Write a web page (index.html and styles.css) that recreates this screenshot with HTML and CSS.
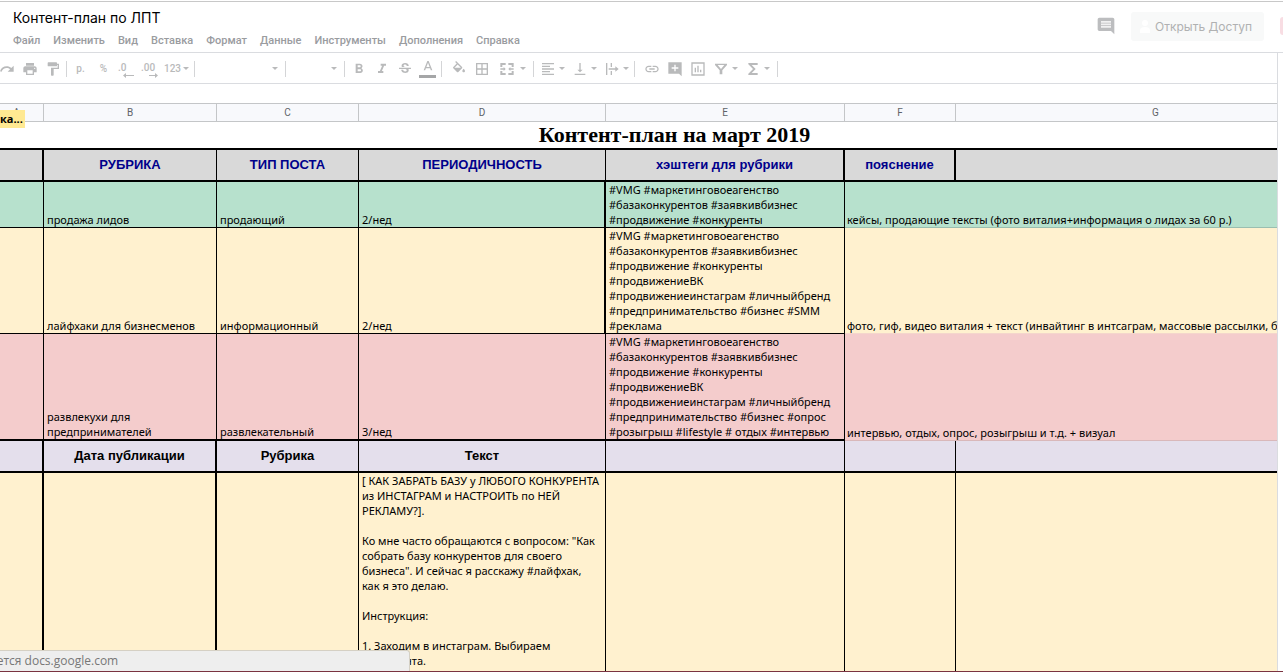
FILE: index.html
```html
<!DOCTYPE html>
<html lang="ru">
<head>
<meta charset="utf-8">
<title>Контент-план по ЛПТ</title>
<link rel="stylesheet" href="styles.css">
</head>
<body>
<header class="header">
  <div class="doc">
    <input class="doc-title" type="text" value="Контент-план по ЛПТ" aria-label="Название документа">
    <nav class="menu">
      <button>Файл</button><button>Изменить</button><button>Вид</button><button>Вставка</button><button>Формат</button><button>Данные</button><button>Инструменты</button><button>Дополнения</button><button>Справка</button>
    </nav>
  </div>
  <div class="actions">
    <button class="comments" aria-label="Комментарии"><svg viewBox="0 0 24 24" width="20" height="20"><path d="M22 4c0-1.100-.9-2-2-2H4c-1.100 0-2 .9-2 2v12c0 1.100.9 2 2 2h14l4 4V4z"/><path fill="#f1f1f2" d="M6 12h12v2H6zM6 9h12v2H6zM6 6h12v2H6z"/></svg></button>
    <button class="share"><svg viewBox="0 0 12 16" width="12" height="16"><circle cx="6" cy="4" r="3"/><path d="M1 14V11c0-2 2-3 5-3s5 1 5 3v3z"/></svg>Открыть Доступ</button>
    <span class="avatar"></span>
  </div>
</header>
<main class="work">
  <div class="main-column">
    <div class="toolbar" role="toolbar" aria-label="Форматирование">
      <button class="tool" aria-label="Повторить"><svg viewBox="0 0 24 24"><path d="M18.400 10.600C16.550 9 14.150 8 11.500 8c-4.650 0-8.580 3-9.960 7.200L3.900 16c1-3.200 4-5.500 7.600-5.500 1.950 0 3.730.7 5.120 1.900L13 16h9V7z"/></svg></button>
      <button class="tool" aria-label="Печать"><svg viewBox="0 0 24 24"><path d="M19 8H5c-1.660 0-3 1.340-3 3v6h4v4h12v-4h4v-6c0-1.660-1.340-3-3-3zm-3 11H8v-5h8v5zm3-7c-.55 0-1-.45-1-1s.45-1 1-1 1 .45 1 1-.45 1-1 1zm-1-9H6v4h12V3z"/></svg></button>
      <button class="tool" aria-label="Копировать форматирование"><svg viewBox="0 0 24 24"><path d="M18 4V3c0-.55-.45-1-1-1H5c-.55 0-1 .45-1 1v4c0 .55.450 1 1 1h12c.55 0 1-.45 1-1V6h1v4H9v11c0 .55.450 1 1 1h2c.55 0 1-.45 1-1v-9h8V4h-3z"/></svg></button>
      <span class="sep"></span>
      <button class="tool">р.</button>
      <button class="tool">%</button>
      <button class="tool places"><span>.0</span><svg viewBox="0 0 12 5"><path d="M3 0v2h8v1H3v2L0 2.500z"/></svg></button>
      <button class="tool places"><span>.00</span><svg viewBox="0 0 12 5"><path d="M9 0v2H3v1h6v2l3-2.500z"/></svg></button>
      <button class="tool format">123<svg class="arrow" viewBox="0 0 6 3"><path d="M0 0h6L3 3z"/></svg></button>
      <span class="sep"></span>
      <span class="pick pick-font"><select aria-label="Шрифт"><option></option></select><svg class="arrow" viewBox="0 0 6 3"><path d="M0 0h6L3 3z"/></svg></span>
      <span class="sep"></span>
      <span class="pick pick-size"><select aria-label="Размер шрифта"><option></option></select><svg class="arrow" viewBox="0 0 6 3"><path d="M0 0h6L3 3z"/></svg></span>
      <span class="sep"></span>
      <button class="tool" aria-label="Полужирный"><svg viewBox="0 0 24 24"><path d="M15.600 10.790c.97-.67 1.650-1.770 1.650-2.790 0-2.260-1.750-4-4-4H7v14h7.040c2.090 0 3.710-1.700 3.710-3.790 0-1.520-.86-2.820-2.150-3.420zM10 6.500h3c.83 0 1.500.67 1.500 1.500s-.67 1.500-1.500 1.500h-3v-3zm3.500 9H10v-3h3.500c.83 0 1.500.67 1.500 1.500s-.67 1.500-1.500 1.500z"/></svg></button>
      <button class="tool" aria-label="Курсив"><svg viewBox="0 0 24 24"><path d="M10 4v3h2.210l-3.420 8H6v3h8v-3h-2.210l3.420-8H18V4z"/></svg></button>
      <button class="tool" aria-label="Зачеркнутый"><svg viewBox="0 0 24 24"><path d="M6.850 7.080C6.850 4.370 9.450 3 12.240 3c1.640 0 3 .49 3.900 1.280.77.65 1.460 1.730 1.460 3.240h-3c0-.31-.05-.59-.15-.85-.29-.86-1.200-1.280-2.250-1.280-1.860 0-2.340 1-2.340 1.700 0 .48.25.88.74 1.210.38.25.77.48 1.410.7H7.390c-.21-.34-.54-.89-.54-1.920zM21 12v-2H3v2h9.620c1.150.45 1.960.75 1.960 1.970 0 1-.81 1.670-2.280 1.670-1.540 0-2.930-.54-2.930-2.510H6.400c0 .55.08 1.130.24 1.580.81 2.290 3.290 3.300 5.670 3.300 2.270 0 5.300-.89 5.300-4.050 0-.3 0-1.160-.48-1.940H21V12z"/></svg></button>
      <button class="tool text-color" aria-label="Цвет текста"><svg viewBox="0 0 24 24"><path d="M11 3L5.500 17h2.250l1.120-3h6.250l1.120 3h2.250L13 3h-2zm-1.380 9L12 5.670 14.380 12H9.620z"/></svg></button>
      <span class="sep"></span>
      <div class="group">
        <button class="tool" aria-label="Цвет заливки"><svg viewBox="0 0 24 24"><path d="M16.560 8.940L7.620 0 6.210 1.410l2.380 2.380-5.150 5.150c-.59.59-.59 1.540 0 2.120l5.500 5.500c.6.59 1.520.59 2.120 0l5.500-5.500c.59-.58.59-1.530 0-2.120zM5.200 10L10 5.200 14.800 10zM19 11.500s-2 2.170-2 3.500c0 1.100.9 2 2 2s2-.9 2-2c0-1.330-2-3.500-2-3.500z"/></svg></button>
        <button class="tool" aria-label="Границы"><svg viewBox="0 0 24 24"><path d="M3 3v18h18V3H3zm8 16H5v-6h6v6zm0-8H5V5h6v6zm8 8h-6v-6h6v6zm0-8h-6V5h6v6z"/></svg></button>
        <button class="tool merge" aria-label="Объединить ячейки"><svg viewBox="0 0 24 24"><path d="M2 3h8v3H5v3H2zM14 3h8v6h-3V6h-5zM2 15h3v3h5v3H2zM19 15h3v6h-8v-3h5zM2 11h5V9l3 3-3 3v-2H2zM22 11h-5V9l-3 3 3 3v-2h5z"/></svg></button>
        <button class="more" aria-label="Варианты объединения"><svg class="arrow" viewBox="0 0 6 3"><path d="M0 0h6L3 3z"/></svg></button>
      </div>
      <span class="sep"></span>
      <button class="tool" aria-label="Горизонтальное выравнивание"><svg viewBox="0 0 24 24"><path d="M15 15H3v2h12v-2zm0-8H3v2h12V7zM3 13h18v-2H3v2zm0 8h18v-2H3v2zM3 3v2h18V3H3z"/></svg></button>
      <button class="more" aria-label="Варианты"><svg class="arrow" viewBox="0 0 6 3"><path d="M0 0h6L3 3z"/></svg></button>
      <button class="tool" aria-label="Вертикальное выравнивание"><svg viewBox="0 0 24 24"><path d="M16 13h-3V3h-2v10H8l4 4 4-4zM4 19v2h16v-2H4z"/></svg></button>
      <button class="more" aria-label="Варианты"><svg class="arrow" viewBox="0 0 6 3"><path d="M0 0h6L3 3z"/></svg></button>
      <button class="tool" aria-label="Перенос текста"><svg viewBox="0 0 24 24"><path d="M3 3h2v18H3zM10 3h2v6h-2zM10 15h2v6h-2zM7 11h10V8l5 4-5 4v-3H7z"/></svg></button>
      <button class="more" aria-label="Варианты"><svg class="arrow" viewBox="0 0 6 3"><path d="M0 0h6L3 3z"/></svg></button>
      <span class="sep"></span>
      <div class="group">
        <button class="tool" aria-label="Вставить ссылку"><svg viewBox="0 0 24 24"><path d="M3.900 12c0-1.710 1.390-3.100 3.100-3.100h4V7H7c-2.760 0-5 2.240-5 5s2.240 5 5 5h4v-1.900H7c-1.710 0-3.100-1.390-3.100-3.100zM8 13h8v-2H8v2zm9-6h-4v1.900h4c1.710 0 3.100 1.390 3.100 3.100s-1.390 3.100-3.100 3.100h-4V17h4c2.760 0 5-2.240 5-5s-2.240-5-5-5z"/></svg></button>
        <button class="tool" aria-label="Вставить комментарий"><svg viewBox="0 0 24 24"><path d="M22 2H2v17h16l4 4V2zM17 11.500h-4v4h-2v-4H7v-2h4v-4h2v4h4v2z"/></svg></button>
        <button class="tool" aria-label="Вставить диаграмму"><svg viewBox="0 0 24 24"><path d="M2 2v20h20V2H2zm18 18H4V4h16v16zM9 17H7v-7h2v7zm4 0h-2V7h2v10zm4 0h-2v-4h2v4z"/></svg></button>
        <button class="tool" aria-label="Создать фильтр"><svg viewBox="0 0 24 24"><path d="M3 4h18v2l-7 8v6h-4v-6L3 6zM7 6l5 6 5-6z"/></svg></button>
        <button class="more" aria-label="Варианты фильтра"><svg class="arrow" viewBox="0 0 6 3"><path d="M0 0h6L3 3z"/></svg></button>
        <button class="tool" aria-label="Функции"><svg viewBox="0 0 24 24"><path d="M19 3H5v2l7 7-7 7v2h14v-3H10l6-6-6-6h9z"/></svg></button>
        <button class="more" aria-label="Список функций"><svg class="arrow" viewBox="0 0 6 3"><path d="M0 0h6L3 3z"/></svg></button>
      </div>
      <span class="sep"></span>
    </div>
    <div class="formula"></div>
    <div class="sheet">
      <table class="grid">
        <colgroup><col class="col-a"><col class="col-b"><col class="col-c"><col class="col-d"><col class="col-e"><col class="col-f"><col class="col-g"></colgroup>
        <thead>
          <tr class="letters"><th>A</th><th>B</th><th>C</th><th>D</th><th>E</th><th>F</th><th>G</th></tr>
        </thead>
        <tbody>
          <tr class="title-row"><td colspan="7">Контент-план на март 2019</td></tr>
          <tr class="head gray"><th class="thick"></th><th>РУБРИКА</th><th>ТИП ПОСТА</th><th>ПЕРИОДИЧНОСТЬ</th><th class="thick">хэштеги для рубрики</th><th class="thick">пояснение</th><th></th></tr>
          <tr class="green"><td></td><td>продажа лидов</td><td>продающий</td><td class="thick">2/нед</td><td>#VMG #маркетинговоеагенство<br>#базаконкурентов #заявкивбизнес<br>#продвижение #конкуренты</td><td class="note" colspan="2">кейсы, продающие тексты (фото виталия+информация о лидах за 60 р.)</td></tr>
          <tr class="yellow"><td></td><td>лайфхаки для бизнесменов</td><td>информационный</td><td class="thick">2/нед</td><td>#VMG #маркетинговоеагенство<br>#базаконкурентов #заявкивбизнес<br>#продвижение #конкуренты<br>#продвижениеВК<br>#продвижениеинстаграм #личныйбренд<br>#предпринимательство #бизнес #SMM<br>#реклама</td><td class="note" colspan="2">фото, гиф, видео виталия + текст (инвайтинг в интсаграм, массовые рассылки, б</td></tr>
          <tr class="pink"><td></td><td>развлекухи для<br>предпринимателей</td><td>развлекательный</td><td>3/нед</td><td>#VMG #маркетинговоеагенство<br>#базаконкурентов #заявкивбизнес<br>#продвижение #конкуренты<br>#продвижениеВК<br>#продвижениеинстаграм #личныйбренд<br>#предпринимательство #бизнес #опрос<br>#розыгрыш #lifestyle # отдых #интервью</td><td class="note" colspan="2">интервью, отдых, опрос, розыгрыш и т.д. + визуал</td></tr>
          <tr class="head lilac"><th class="thick"></th><th class="thick">Дата публикации</th><th>Рубрика</th><th>Текст</th><th></th><th></th><th></th></tr>
          <tr class="post"><td class="thick"></td><td class="thick"></td><td></td><td>[ КАК ЗАБРАТЬ БАЗУ у ЛЮБОГО КОНКУРЕНТА<br>из ИНСТАГРАМ и НАСТРОИТЬ по НЕЙ<br>РЕКЛАМУ?].<br><br>Ко мне часто обращаются с вопросом: "Как<br>собрать базу конкурентов для своего<br>бизнеса". И сейчас я расскажу #лайфхак,<br>как я это делаю.<br><br>Инструкция:<br><br>1. Заходим в инстаграм. Выбираем<br>конкурента.</td><td></td><td></td><td></td></tr>
        </tbody>
      </table>
      <span class="name-tag">ка...</span>
    </div>
  </div>
  <aside class="side"></aside>
</main>
<div class="status"><span>ается docs.google.com</span></div>
</body>
</html>
```
FILE: styles.css
```css
* { box-sizing: border-box; }

body {
  margin: 0;
  height: 100vh;
  display: flex;
  flex-direction: column;
  position: relative;
  overflow: hidden;
  background: #fff;
  border-bottom: 1px solid #7a3340;
  font-family: Roboto, "Liberation Sans", sans-serif;
}

button, select, input {
  border: 0;
  padding: 0;
  background: none;
  font: inherit;
  color: inherit;
}

svg { display: block; fill: currentColor; }

/* Header */
.header {
  display: flex;
  justify-content: space-between;
  height: 52px;
  flex: none;
  margin-top: 1px;
  border-top: 1px solid #c8c8c8;
  border-bottom: 1px solid #dadce0;
}

.doc { padding: 6px 0 0 13px; }

.doc-title {
  display: block;
  width: 240px;
  height: 18px;
  font-family: Inter, sans-serif;
  font-size: 14px;
  color: #000;
}

.menu {
  display: flex;
  gap: 13px;
  padding-top: 7px;
  font-size: 11px;
  font-weight: 500;
  line-height: 16px;
  color: #9a9c9f;
}

.actions {
  display: flex;
  align-items: flex-start;
  padding-top: 10px;
}

.comments { color: #bcbdbf; padding-top: 4px; }

.share {
  display: flex;
  align-items: center;
  gap: 4px;
  height: 29px;
  margin: 0 16px 0 15px;
  padding: 0 12px 0 8px;
  border-radius: 3px;
  background: #f8f9f9;
  font-family: Inter, sans-serif;
  font-size: 12px;
  color: #b0b1b2;
}

.share svg { fill: #fff; }

.avatar {
  width: 3px;
  height: 18px;
  margin-top: 5px;
  border-radius: 9px 0 0 9px;
  background: #f8dde3;
}

/* Toolbar */
.work { display: flex; flex: 1; min-height: 0; }

.main-column {
  flex: 1;
  min-width: 0;
  display: flex;
  flex-direction: column;
}

.side { width: 6px; border-left: 1px solid #dadce0; }

.toolbar {
  display: flex;
  align-items: center;
  flex: none;
  height: 31px;
  margin-left: -5px;
  padding-top: 1px;
  border-bottom: 1px solid #dadce0;
  color: #b9babb;
  font-size: 10px;
  font-weight: 500;
}

.tool {
  display: flex;
  flex-direction: column;
  align-items: center;
  justify-content: center;
  width: 23px;
  height: 24px;
}

.tool svg { width: 16px; height: 16px; }
.places { align-items: flex-start; padding: 4px 0 0 3px; line-height: 10px; }
.tool.places svg { width: 12px; height: 5px; margin-left: 5px; }
.tool svg.arrow, .arrow { width: 6px; height: 3px; }

.format { width: 31px; flex-direction: row; gap: 2px; }
.merge { width: 27px; }
.more { width: 9px; height: 24px; }
.group { display: flex; padding: 0 2px 0 3px; }

.text-color::after {
  content: "";
  width: 17px;
  height: 3px;
  background: #a5a6a7;
}

.sep {
  width: 1px;
  height: 16px;
  margin: 0 2px;
  background: #d4d5d7;
}

.pick { display: flex; align-items: center; padding-right: 5px; }
.pick select { flex: 1; min-width: 0; height: 20px; appearance: none; }
.pick-font { width: 86px; }
.pick-size { width: 54px; }

.formula { height: 19px; flex: none; }

/* Sheet */
.sheet { position: relative; flex: 1; min-height: 0; overflow: hidden; }

.grid {
  width: 1366px;
  margin-left: -10px;
  table-layout: fixed;
  border-collapse: separate;
  border-spacing: 0;
  font-family: "Noto Sans", "Open Sans", sans-serif;
  font-size: 11px;
  line-height: 15px;
  color: #000;
}

.col-a { width: 54px; }
.col-b { width: 173px; }
.col-c { width: 142px; }
.col-d { width: 247px; }
.col-e { width: 239px; }
.col-f { width: 111px; }
.col-g { width: 400px; }

.grid td, .grid th {
  padding: 0 0 0 3px;
  border: solid #000;
  border-width: 0 1px 1px 0;
  vertical-align: bottom;
  white-space: nowrap;
  overflow: hidden;
}

.grid .letters th {
  height: 19px;
  padding: 0;
  border-color: #c4c6c8;
  border-top-width: 1px;
  background: #f8f9fc;
  vertical-align: middle;
  font: 10px/14px Roboto, sans-serif;
  color: #5f6368;
}

.grid .title-row td {
  height: 28px;
  border-width: 0 0 2px;
  vertical-align: middle;
  text-align: center;
  font: bold 22px/26px "Liberation Serif", serif;
}

.grid .head th {
  height: 32px;
  padding: 0;
  border-bottom-width: 2px;
  vertical-align: middle;
  font: bold 13px/16px "Liberation Sans", sans-serif;
}

.grid .thick { border-right-width: 2px; }

.gray { background: #d9d9d9; color: #00008b; }
.gray th { border-color: #000; }
.green { background: #b7e1cd; }
.yellow, .post { background: #fff1cf; }
.pink { background: #f4cccc; }
.lilac { background: #e4dfec; }

.grid .pink td { border-bottom-width: 2px; }
.grid .note { padding-left: 2px; border-bottom-color: rgba(90, 110, 110, 0.3); }
.grid .yellow .note { border-bottom-color: #f4d6cc; }
.grid .pink .note { border-bottom-width: 1px; border-bottom-color: #d9b8ba; }

.grid .post td { height: 400px; vertical-align: top; }

.name-tag {
  position: absolute;
  left: 0;
  top: 7px;
  width: 25px;
  height: 18px;
  background: #ffe992;
  font: bold 11px/18px "Open Sans", sans-serif;
}

/* Browser status bubble */
.status {
  position: absolute;
  left: 0;
  bottom: 0;
  width: 410px;
  height: 21px;
  overflow: hidden;
  border: solid #d5d0c4;
  border-width: 1px 1px 0 0;
  border-radius: 0 3px 0 0;
  background: #eee;
  font: 12px/20px "Open Sans", sans-serif;
  color: #777;
}

.status span { margin-left: -10px; }
```
